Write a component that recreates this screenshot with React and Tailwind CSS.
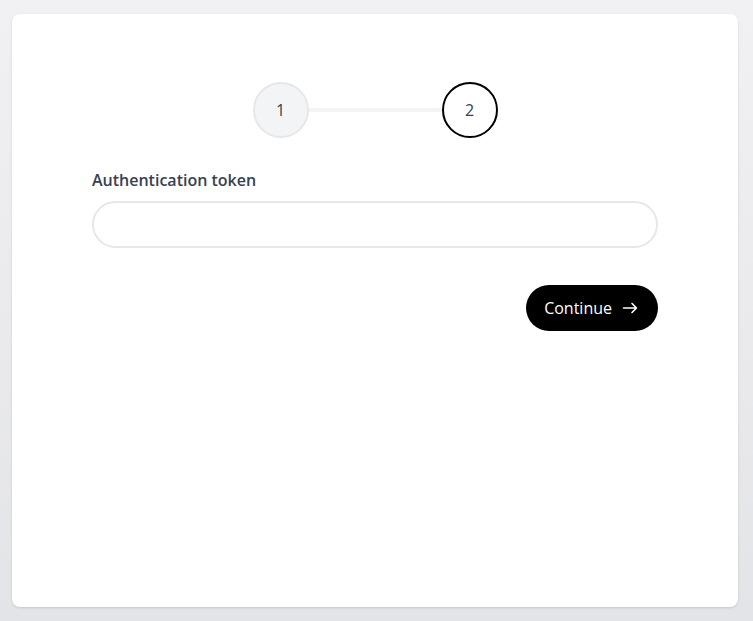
import React from "react";

function Step({ n, active }) {
  return (
    <div
      className={
        "flex h-14 w-14 items-center justify-center rounded-full border-2 text-base text-gray-700 " +
        (active ? "border-black bg-white" : "border-gray-200 bg-gray-100")
      }
    >
      {n}
    </div>
  );
}

export default function App() {
  return (
    <div
      className="min-h-screen bg-gradient-to-b from-[#f1f1f3] to-[#e3e4e7] pl-3 pr-[15px] pt-[14px] pb-[14px]"
      style={{ fontFamily: '"Open Sans", "Noto Sans", sans-serif' }}
    >
      <div className="h-[593px] rounded-lg bg-white px-20 pt-[68px] shadow-sm">
        {/* stepper */}
        <div className="flex items-center justify-center">
          <Step n={1} />
          <div className="h-1 w-[133px] bg-gray-100" />
          <Step n={2} active />
        </div>

        <form className="mt-[30px]" onSubmit={(e) => e.preventDefault()}>
          <label className="block text-base font-semibold text-gray-700">
            Authentication token
          </label>
          <input
            type="text"
            className="mt-[9px] block h-[47px] w-full rounded-full border-2 border-gray-200 px-5 outline-none"
          />
          <div className="mt-[37px] flex justify-end">
            <button
              type="submit"
              className="flex h-[46px] items-center gap-[10px] rounded-full bg-black pl-[18px] pr-[20px] text-base text-white"
            >
              Continue
              <svg width="16" height="16" viewBox="0 0 16 16" fill="none" stroke="currentColor" strokeWidth="1.6" strokeLinecap="round" strokeLinejoin="round">
                <path d="M1.5 8h13M10 3.5L14.5 8 10 12.5" />
              </svg>
            </button>
          </div>
        </form>
      </div>
    </div>
  );
}
